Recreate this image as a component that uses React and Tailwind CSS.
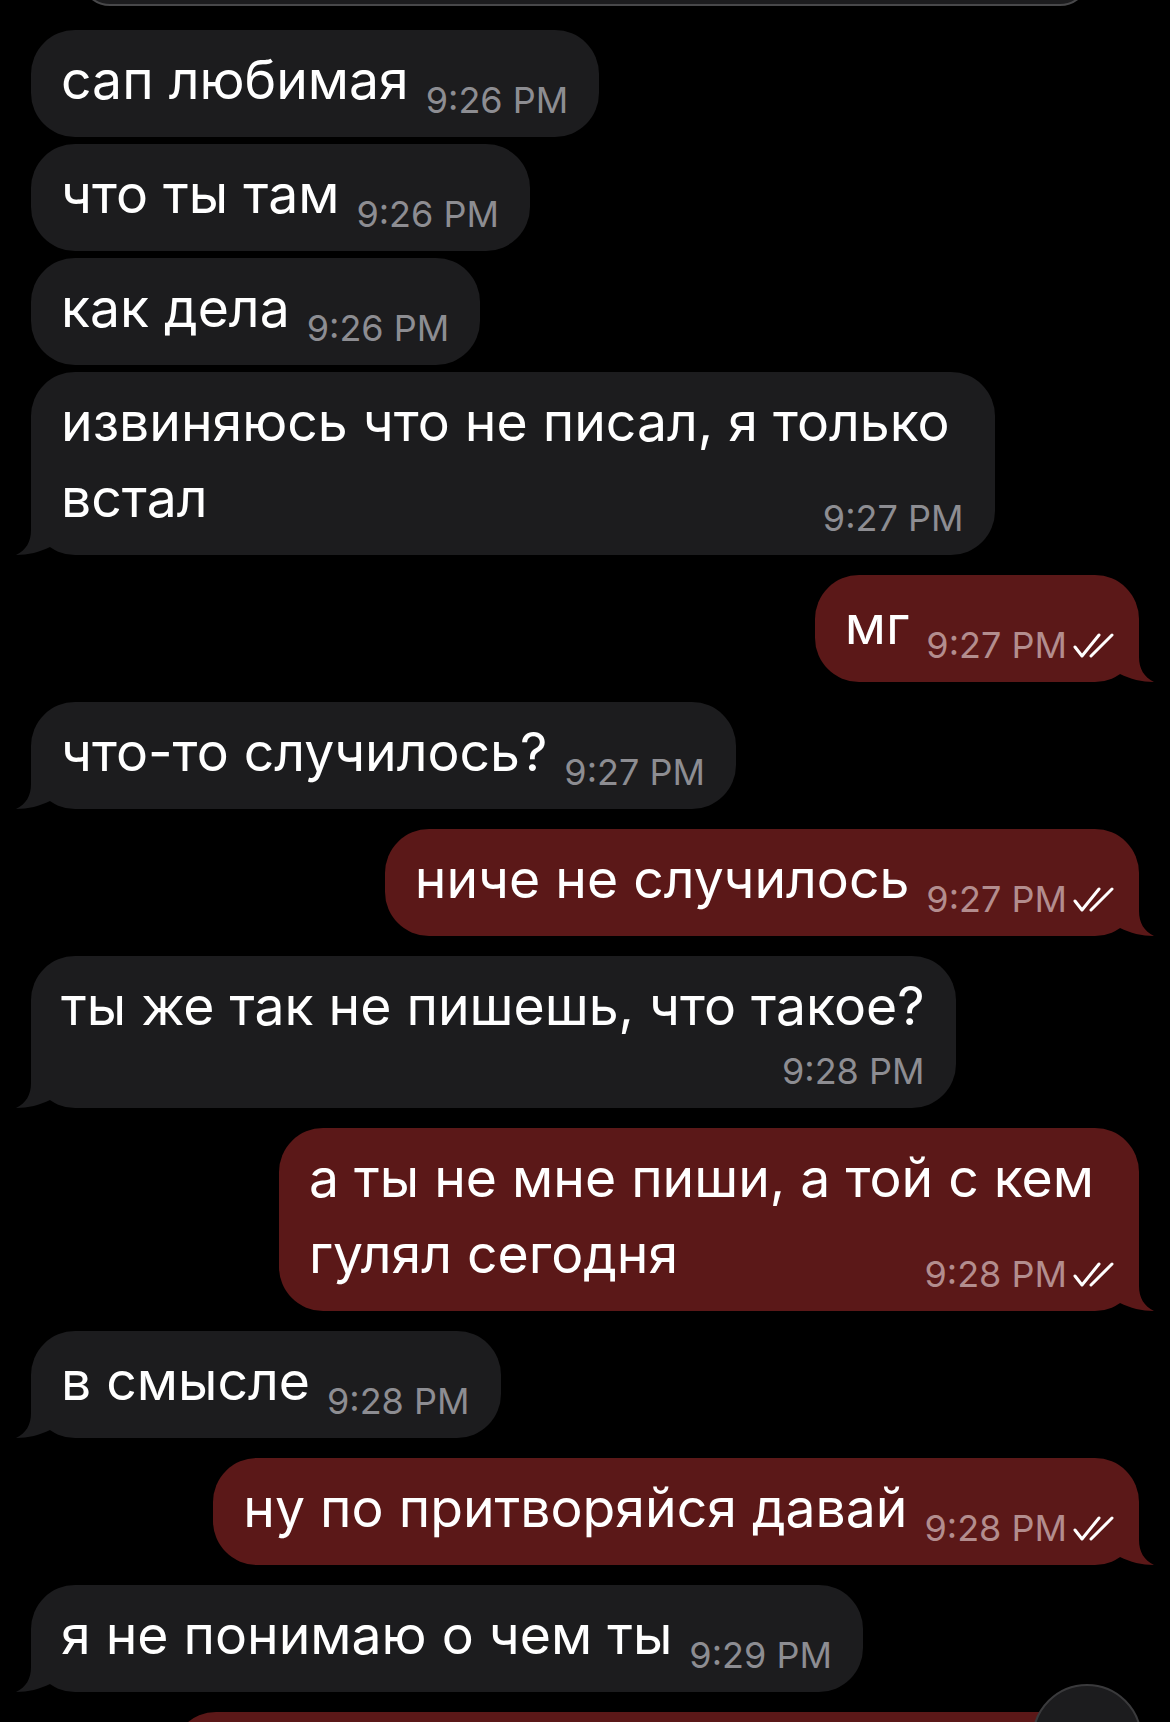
import React from 'react';
import clsx from 'clsx';

const messages = [
    { from: 'in', lines: ['сап любимая'], time: '9:26 PM' },
    { from: 'in', lines: ['что ты там'], time: '9:26 PM' },
    { from: 'in', lines: ['как дела'], time: '9:26 PM' },
    { from: 'in', lines: ['извиняюсь что не писал, я только', 'встал'], time: '9:27 PM', tail: true },
    { from: 'out', lines: ['мг'], time: '9:27 PM', tail: true },
    { from: 'in', lines: ['что-то случилось?'], time: '9:27 PM', tail: true },
    { from: 'out', lines: ['ниче не случилось'], time: '9:27 PM', tail: true },
    { from: 'in', lines: ['ты же так не пишешь, что такое?'], time: '9:28 PM', tail: true, timeBelow: true },
    { from: 'out', lines: ['а ты не мне пиши, а той с кем', 'гулял сегодня'], time: '9:28 PM', tail: true },
    { from: 'in', lines: ['в смысле'], time: '9:28 PM', tail: true },
    { from: 'out', lines: ['ну по притворяйся давай'], time: '9:28 PM', tail: true },
    { from: 'in', lines: ['я не понимаю о чем ты'], time: '9:29 PM', tail: true },
];

// double tick next to outgoing time
const Checks = () => (
    <svg width="44" height="26" viewBox="0 0 44 26" className="mb-[4px] ml-[6px] shrink-0" fill="none" stroke="white" strokeWidth="3" strokeLinecap="round" strokeLinejoin="round">
        <polyline points="2,14 9,23 26,2" />
        <line x1="18" y1="23" x2="39" y2="2" />
    </svg>
);

// bubble tail, drawn for the left side and mirrored for outgoing
const Tail = ({ out }) => (
    <svg
        width="35"
        height="45"
        viewBox="0 0 35 45"
        className={clsx('absolute bottom-0', out ? 'right-[-15px] -scale-x-100' : 'left-[-15px]')}
    >
        <path d="M15 0 L15 20 C15 32 10 40 0 45 C12 45 24 42 34 37 L34 0 Z" fill={out ? '#5b1818' : '#1c1c1e'} />
    </svg>
);

const Meta = ({ time, out }) => (
    <span className={clsx('flex items-end shrink-0 text-[36px] leading-[36px]', out ? 'text-[#b38d8e]' : 'text-[#8d8d92]')}>
        {time}
        {out && <Checks />}
    </span>
);

const Bubble = ({ msg }) => {
    const out = msg.from === 'out';
    const multi = msg.lines.length > 1;
    const rest = msg.lines.slice(0, -1);
    const last = msg.lines[msg.lines.length - 1];

    return (
        <div className={clsx('flex', out ? 'justify-end' : 'justify-start')}>
            <div
                className={clsx(
                    'relative rounded-[44px] pt-[12px] pb-[19px] pl-[30px] text-white',
                    out ? 'bg-[#5b1818]' : 'bg-[#1c1c1e]',
                    multi ? 'pr-[45px]' : out ? 'pr-[22px]' : 'pr-[31px]'
                )}
            >
                {rest.map((line) => (
                    <div key={line} className="text-[53.5px] leading-[76px] whitespace-nowrap">{line}</div>
                ))}
                {msg.timeBelow ? (
                    <>
                        <div className="text-[53.5px] leading-[76px] whitespace-nowrap">{last}</div>
                        <div className="flex justify-end mt-[9px]">
                            <Meta time={msg.time} out={out} />
                        </div>
                    </>
                ) : (
                    <div className={clsx('flex items-end justify-between', multi && (out ? '-mr-[23px]' : '-mr-[14px]'))}>
                        <span className="text-[53.5px] leading-[76px] whitespace-nowrap">{last}</span>
                        <span className="ml-[17px]">
                            <Meta time={msg.time} out={out} />
                        </span>
                    </div>
                )}
                {msg.tail && <Tail out={out} />}
            </div>
        </div>
    );
};

const App = () => {
    return (
        <div className="relative w-[1170px] h-[1722px] overflow-hidden bg-black px-[31px] font-['Inter','Noto_Sans',sans-serif]">
            {/* pinned bar, mostly scrolled off */}
            <div className="mx-[49px] -mt-[54px] h-[60px] rounded-[30px] border-2 border-[#48484a] bg-[#1c1c1e]" />

            <div className="flex flex-col mt-[24px]">
                {messages.map((msg, i) => {
                    const sameSender = i > 0 && messages[i - 1].from === msg.from;
                    return (
                        <div key={i} className={clsx(i === 0 ? '' : sameSender ? 'mt-[7px]' : 'mt-[20px]')}>
                            <Bubble msg={msg} />
                        </div>
                    );
                })}

                <div className="flex justify-end mt-[20px]">
                    <div className="w-[967px] h-[107px] rounded-[44px] bg-[#5b1818]" />
                </div>
            </div>

            {/* scroll-down button */}
            <div className="absolute left-[1032px] top-[1684px] w-[110px] h-[110px] rounded-full border-2 border-[#3a3a3c] bg-[#1c1c1e]" />
        </div>
    );
};

export default App;
